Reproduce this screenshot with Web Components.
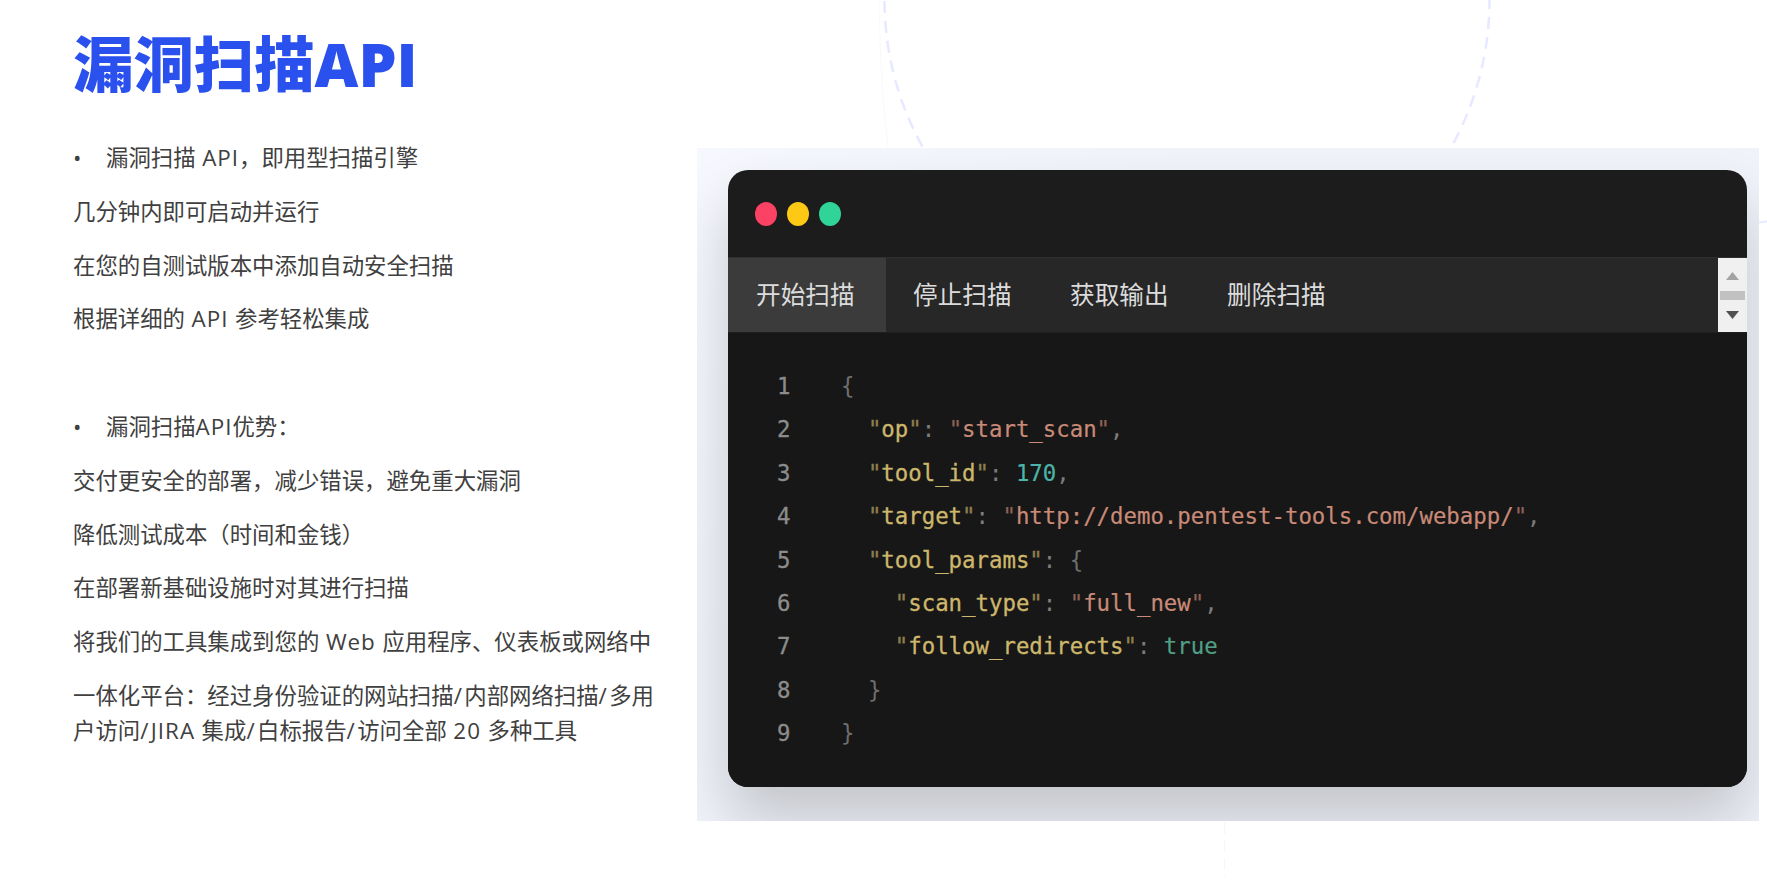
<!DOCTYPE html>
<html lang="zh-CN">
<head>
<meta charset="utf-8">
<title>漏洞扫描API</title>
<style>
  html, body { margin: 0; background: #fff; }
</style>
</head>
<body>
<slide-page>
  <slide-copy slot="copy">
    <slide-title>漏洞扫描API</slide-title>
    <copy-para bullet>漏洞扫描 <latin-run>API</latin-run>&#xFF0C;即用型扫描引擎</copy-para>
    <copy-para>几分钟内即可启动并运行</copy-para>
    <copy-para>在您的自测试版本中添加自动安全扫描</copy-para>
    <copy-para>根据详细的 <latin-run>API</latin-run> 参考轻松集成</copy-para>
    <copy-para>&nbsp;</copy-para>
    <copy-para bullet>漏洞扫描<latin-run>API</latin-run>优势&#xFF1A;</copy-para>
    <copy-para>交付更安全的部署&#xFF0C;减少错误&#xFF0C;避免重大漏洞</copy-para>
    <copy-para>降低测试成本&#xFF08;时间和金钱&#xFF09;</copy-para>
    <copy-para>在部署新基础设施时对其进行扫描</copy-para>
    <copy-para>将我们的工具集成到您的 <latin-run>Web</latin-run> 应用程序、仪表板或网络中</copy-para>
    <copy-para>一体化平台&#xFF1A;经过身份验证的网站扫描<latin-run slash>/</latin-run>内部网络扫描<latin-run slash>/</latin-run>多用<br>户访问<latin-run slash>/</latin-run><latin-run>JIRA</latin-run> 集成<latin-run slash>/</latin-run>白标报告<latin-run slash>/</latin-run>访问全部 <latin-run>20</latin-run> 多种工具</copy-para>
  </slide-copy>
  <code-panel slot="panel">
    <code-window>
      <tab-strip>
        <strip-tab active>开始扫描</strip-tab>
        <strip-tab>停止扫描</strip-tab>
        <strip-tab>获取输出</strip-tab>
        <strip-tab>删除扫描</strip-tab>
      </tab-strip>
      <code-block></code-block>
    </code-window>
  </code-panel>
</slide-page>

<script>
const uiFont = '"Open Sans", "Noto Sans CJK SC", sans-serif';

class SlidePage extends HTMLElement {
  constructor() {
    super();
    this.attachShadow({ mode: 'open' }).innerHTML = `
      <style>
        :host { display: block; position: relative; width: 1767px; height: 887px; overflow: hidden; background: #fff; }
        .rings { position: absolute; left: 0; top: 0; }
        .row { position: relative; display: flex; height: 100%; padding-left: 73px; box-sizing: border-box; }
        .left { width: 624px; flex: none; }
        .right { padding-top: 148px; }
      </style>
      <svg class="rings" width="1767" height="887" fill="none">
        <circle cx="1187" cy="0" r="302.5" stroke="#e6e9ff" stroke-width="2.5" stroke-dasharray="12 8" stroke-dashoffset="3"/>
        <path d="M879 0Q880 80 888 148" stroke="#fafafc"/>
        <path d="M1759 222.5 L1767 221.5" stroke="#e8ebff" stroke-width="2"/>
        <path d="M1224.5 822 V878" stroke="#f5f6fb" stroke-width="1" stroke-dasharray="12 6"/>
      </svg>
      <div class="row">
        <div class="left"><slot name="copy"></slot></div>
        <div class="right"><slot name="panel"></slot></div>
      </div>`;
  }
}

class SlideCopy extends HTMLElement {
  constructor() {
    super();
    this.attachShadow({ mode: 'open' }).innerHTML = `
      <style>
        :host { display: block; width: 590px; font-family: ${uiFont}; }
      </style>
      <slot></slot>`;
  }
}

class SlideTitle extends HTMLElement {
  constructor() {
    super();
    this.attachShadow({ mode: 'open' }).innerHTML = `
      <style>
        :host { display: block; height: 141px; padding-top: 20px; box-sizing: border-box; font: 800 60.4px/88px ${uiFont}; color: #2a50ee; white-space: nowrap; }
      </style>
      <slot></slot>`;
  }
}

class CopyPara extends HTMLElement {
  constructor() {
    super();
    this.attachShadow({ mode: 'open' }).innerHTML = `
      <style>
        :host { display: flex; font-size: 22.4px; line-height: 34.7px; word-spacing: .75px; color: #404040; margin-bottom: 19.1px; }
        .dot { display: none; width: 33px; flex: none; }
        :host([bullet]) .dot { display: block; }
      </style>
      <span class="dot">•</span><div><slot></slot></div>`;
  }
}

// the reference's latin glyphs run wider than any installed face
// no whitespace beside the slot: it would show up as a gap in the inline text
class LatinRun extends HTMLElement {
  constructor() {
    super();
    this.attachShadow({ mode: 'open' }).innerHTML =
      '<style>:host { letter-spacing: 1px; } :host([slash]) { letter-spacing: 2.4px; }</style><slot></slot>';
  }
}

class CodePanel extends HTMLElement {
  constructor() {
    super();
    this.attachShadow({ mode: 'open' }).innerHTML = `
      <style>
        :host { display: block; width: 1062px; height: 673px; box-sizing: border-box; padding: 22px 12px 0 31px; overflow: hidden;
          background: linear-gradient(135deg, #f6f8fe, #f0f3fa 30%); }
      </style>
      <slot></slot>`;
  }
}

class CodeWindow extends HTMLElement {
  constructor() {
    super();
    this.attachShadow({ mode: 'open' }).innerHTML = `
      <style>
        :host { display: block; width: 1019px; border-radius: 20px; box-shadow: 0 34px 60px rgba(0, 0, 0, .19); }
        .clip { border-radius: 20px; overflow: hidden; background: #1c1c1c; }
        .bar { display: flex; align-items: center; gap: 10px; height: 87px; padding-left: 27px; box-sizing: border-box; }
        .bar i { width: 22px; height: 24px; border-radius: 50%; }
      </style>
      <div class="clip">
        <div class="bar">
          <i style="background:#fb4164"></i><i style="background:#fdc915"></i><i style="background:#30d498"></i>
        </div>
        <slot></slot>
      </div>`;
  }
}

class TabStrip extends HTMLElement {
  constructor() {
    super();
    this.attachShadow({ mode: 'open' }).innerHTML = `
      <style>
        :host { display: flex; height: 76px; background: #272727; box-sizing: border-box; border-top: 1px solid #2f2f2f; border-bottom: 1px solid #1f1f1f; }
        .tabs { display: flex; flex: 1; }
        .scroll { width: 29px; flex: none; background: #f0f0f0; display: flex; flex-direction: column; align-items: center; padding-top: 14px; box-sizing: border-box; }
        .thumb { width: 25px; height: 9px; background: #c1c1c1; margin: 11px 0; }
      </style>
      <div class="tabs"><slot></slot></div>
      <div class="scroll">
        <svg width="13" height="8"><path d="M6.5 0 13 8H0z" fill="#a3a3a3"/></svg>
        <div class="thumb"></div>
        <svg width="13" height="8"><path d="M0 0H13L6.5 8z" fill="#505050"/></svg>
      </div>`;
  }
}

class StripTab extends HTMLElement {
  constructor() {
    super();
    this.attachShadow({ mode: 'open' }).innerHTML = `
      <style>
        :host { display: flex; align-items: center; width: 157px; padding: 0 0 4px 28px; box-sizing: border-box; font: 24.64px "Noto Sans CJK SC", sans-serif; color: #dcdcdc; }
        :host([active]) { background: #3b3b3b; width: 158px; margin-right: -1px; }
      </style>
      <slot></slot>`;
  }
}

const codeLines = [
  [['p', '{']],
  [['k', '  "op"'], ['c', ': '], ['s', '"start_scan"'], ['c', ',']],
  [['k', '  "tool_id"'], ['c', ': '], ['n', '170'], ['c', ',']],
  [['k', '  "target"'], ['c', ': '], ['s', '"http://demo.pentest-tools.com/webapp/"'], ['c', ',']],
  [['k', '  "tool_params"'], ['c', ': '], ['p', '{']],
  [['k', '    "scan_type"'], ['c', ': '], ['s', '"full_new"'], ['c', ',']],
  [['k', '    "follow_redirects"'], ['c', ': '], ['b', 'true']],
  [['p', '  }']],
  [['p', '}']],
];

class CodeBlock extends HTMLElement {
  constructor() {
    super();
    const rows = codeLines.map((parts, i) => {
      const spans = parts.map(([kind, text]) => {
        const marked = text.replace(/"/g, '<span class="q">"</span>');
        return `<span class="${kind}">${marked}</span>`;
      }).join('');
      return `<div class="row"><span class="num">${i + 1}</span><span>${spans}</span></div>`;
    }).join('');
    this.attachShadow({ mode: 'open' }).innerHTML = `
      <style>
        :host { display: block; height: 454px; box-sizing: border-box; padding: 32px 0 0 49px; background: #171717;
          font: 22.35px/43.4px "DejaVu Sans Mono", monospace; }
        .row { display: flex; white-space: pre; }
        .num { width: 64px; flex: none; color: #8c8c8c; -webkit-text-stroke: .3px; }
        .q { opacity: .65; }
        .k { color: #cdb76c; -webkit-text-stroke: .3px; }
        .s { color: #c98a78; -webkit-text-stroke: .2px; }
        .n { color: #4cb5a8; -webkit-text-stroke: .2px; }
        .b { color: #4f9f86; -webkit-text-stroke: .2px; }
        .c { color: #7d7d7d; }
        .p { color: #6e6e6e; }
      </style>
      ${rows}`;
  }
}

customElements.define('slide-page', SlidePage);
customElements.define('slide-copy', SlideCopy);
customElements.define('slide-title', SlideTitle);
customElements.define('copy-para', CopyPara);
customElements.define('latin-run', LatinRun);
customElements.define('code-panel', CodePanel);
customElements.define('code-window', CodeWindow);
customElements.define('tab-strip', TabStrip);
customElements.define('strip-tab', StripTab);
customElements.define('code-block', CodeBlock);
</script>
</body>
</html>
